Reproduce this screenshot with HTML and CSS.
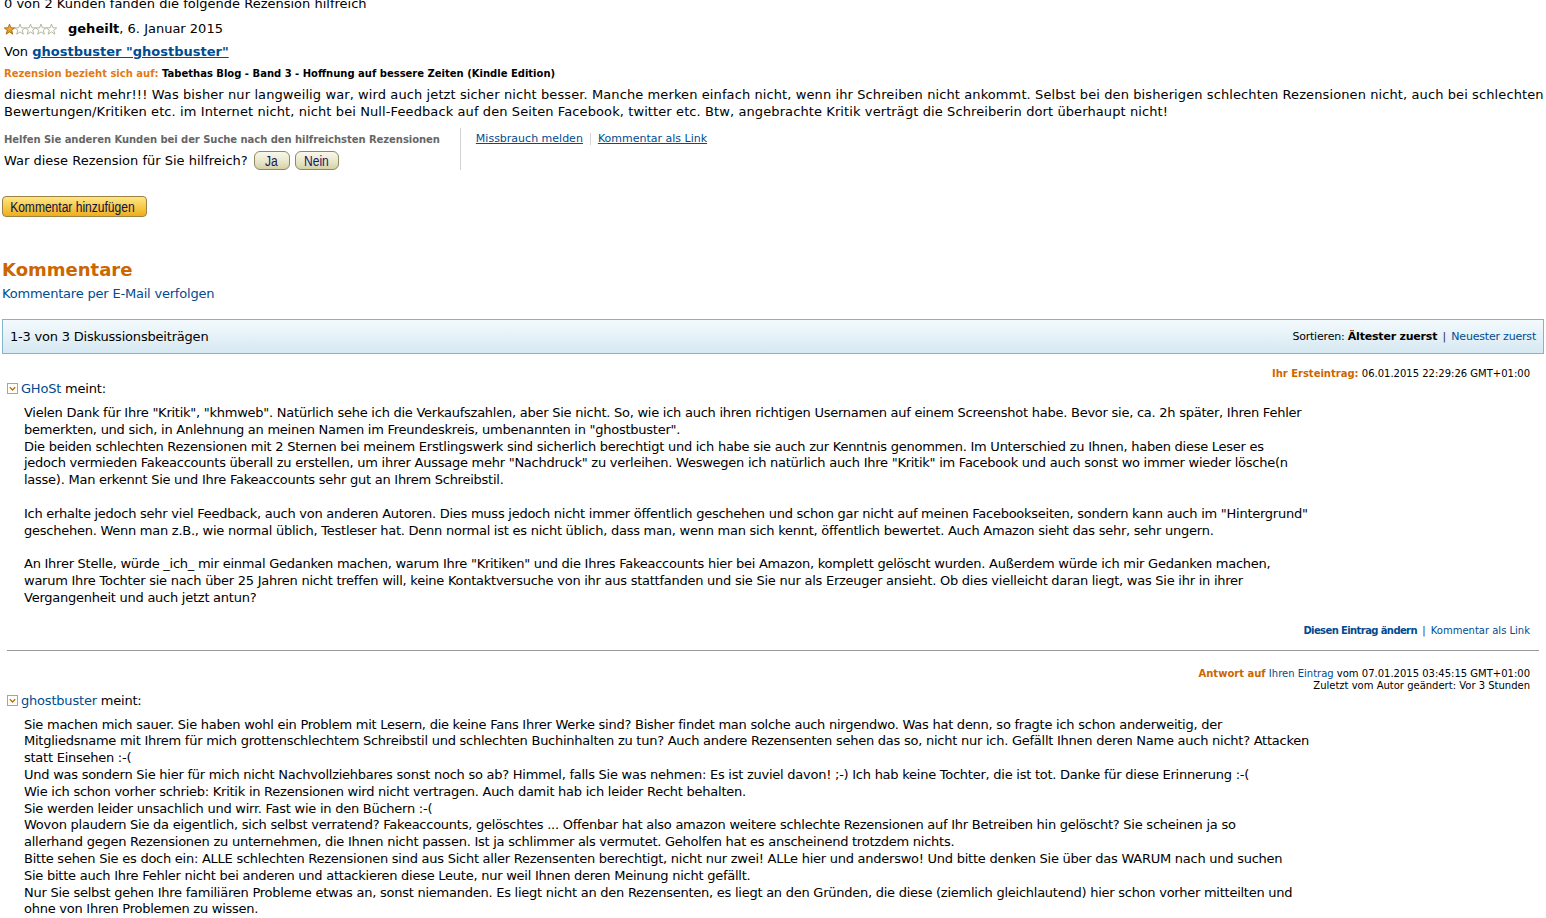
FILE: index.html
```html
<!DOCTYPE html>
<html lang="de">
<head>
<meta charset="utf-8">
<title>Rezension</title>
<link rel="stylesheet" href="styles.css">
</head>
<body>
<div class="page">
  <div class="review">
    <div class="helpful-count">0 von 2 Kunden fanden die folgende Rezension hilfreich</div>
    <div class="title-row">
      <svg class="stars" width="53" height="12" viewBox="0 0 53 12">
        <defs>
          <linearGradient id="gold" x1="0" y1="0" x2="0" y2="1">
            <stop offset="0" stop-color="#fbc04a"/>
            <stop offset="1" stop-color="#e08a10"/>
          </linearGradient>
          <polygon id="st" points="5.2,0.3 6.6,4 10.4,4.1 7.4,6.5 8.5,10.4 5.2,8.1 1.9,10.4 3,6.5 0,4.1 3.8,4"/>
        </defs>
        <use href="#st" x="0.3" y="0.8" fill="url(#gold)" stroke="#a36a10" stroke-width="0.9"/>
        <use href="#st" x="10.8" y="0.8" fill="#fff" stroke="#aeae98" stroke-width="0.9"/>
        <use href="#st" x="21.3" y="0.8" fill="#fff" stroke="#aeae98" stroke-width="0.9"/>
        <use href="#st" x="31.8" y="0.8" fill="#fff" stroke="#aeae98" stroke-width="0.9"/>
        <use href="#st" x="42.3" y="0.8" fill="#fff" stroke="#aeae98" stroke-width="0.9"/>
      </svg>
      <span><b>geheilt</b>, 6. Januar 2015</span>
    </div>
    <div class="author">Von <a class="author-link" href="#">ghostbuster "ghostbuster"</a></div>
    <div class="refers"><span class="refers-label">Rezension bezieht sich auf:</span> Tabethas Blog - Band 3 - Hoffnung auf bessere Zeiten (Kindle Edition)</div>
    <div class="review-text">diesmal nicht mehr!!! Was bisher nur langweilig war, wird auch jetzt sicher nicht besser. Manche merken einfach nicht, wenn ihr Schreiben nicht ankommt. Selbst bei den bisherigen schlechten Rezensionen nicht, auch bei schlechten Bewertungen/Kritiken etc. im Internet nicht, nicht bei Null-Feedback auf den Seiten Facebook, twitter etc. Btw, angebrachte Kritik verträgt die Schreiberin dort überhaupt nicht!</div>
    <div class="vote-row">
      <div class="vote">
        <div class="vote-head">Helfen Sie anderen Kunden bei der Suche nach den hilfreichsten Rezensionen</div>
        <div class="vote-q">War diese Rezension für Sie hilfreich? <button class="pill pill-ja"><span>Ja</span></button><button class="pill pill-nein"><span>Nein</span></button></div>
      </div>
      <div class="vote-links"><a href="#">Missbrauch melden</a><span class="vsep"></span><a href="#">Kommentar als Link</a></div>
    </div>
    <button class="add-comment"><span>Kommentar hinzufügen</span></button>
  </div>

  <h2 class="comments-title">Kommentare</h2>
  <a class="follow t" href="#">Kommentare per E-Mail verfolgen</a>

  <div class="bar">
    <span class="t">1-3 von 3 Diskussionsbeiträgen</span>
    <span class="sort t">Sortieren: <b>Ältester zuerst</b> <span class="pipe">|</span> <a href="#">Neuester zuerst</a></span>
  </div>

  <div class="posts">
    <div class="post">
      <div class="meta"><span class="meta-label">Ihr Ersteintrag:</span> 06.01.2015 22:29:26 GMT+01:00</div>
      <div class="who">
        <svg class="toggle" width="11" height="11" viewBox="0 0 11 11"><rect x="0.5" y="0.5" width="10" height="10" fill="#fff" stroke="#b7a27a"/><path d="M2.8 4.2 L5.5 6.9 L8.2 4.2" fill="none" stroke="#c36d00" stroke-width="1.4"/></svg>
        <span class="t"><a href="#">GHoSt</a> meint:</span>
      </div>
      <div class="body t">Vielen Dank für Ihre "Kritik", "khmweb". Natürlich sehe ich die Verkaufszahlen, aber Sie nicht. So, wie ich auch ihren richtigen Usernamen auf einem Screenshot habe. Bevor sie, ca. 2h später, Ihren Fehler<br>bemerkten, und sich, in Anlehnung an meinen Namen im Freundeskreis, umbenannten in "ghostbuster".<br>Die beiden schlechten Rezensionen mit 2 Sternen bei meinem Erstlingswerk sind sicherlich berechtigt und ich habe sie auch zur Kenntnis genommen. Im Unterschied zu Ihnen, haben diese Leser es<br>jedoch vermieden Fakeaccounts überall zu erstellen, um ihrer Aussage mehr "Nachdruck" zu verleihen. Weswegen ich natürlich auch Ihre "Kritik" im Facebook und auch sonst wo immer wieder lösche(n<br>lasse). Man erkennt Sie und Ihre Fakeaccounts sehr gut an Ihrem Schreibstil.<br><br>Ich erhalte jedoch sehr viel Feedback, auch von anderen Autoren. Dies muss jedoch nicht immer öffentlich geschehen und schon gar nicht auf meinen Facebookseiten, sondern kann auch im "Hintergrund"<br>geschehen. Wenn man z.B., wie normal üblich, Testleser hat. Denn normal ist es nicht üblich, dass man, wenn man sich kennt, öffentlich bewertet. Auch Amazon sieht das sehr, sehr ungern.<br><br>An Ihrer Stelle, würde _ich_ mir einmal Gedanken machen, warum Ihre "Kritiken" und die Ihres Fakeaccounts hier bei Amazon, komplett gelöscht wurden. Außerdem würde ich mir Gedanken machen,<br>warum Ihre Tochter sie nach über 25 Jahren nicht treffen will, keine Kontaktversuche von ihr aus stattfanden und sie Sie nur als Erzeuger ansieht. Ob dies vielleicht daran liegt, was Sie ihr in ihrer<br>Vergangenheit und auch jetzt antun?</div>
      <div class="actions"><a class="strong" href="#">Diesen Eintrag ändern</a> <span class="pipe">|</span> <a href="#">Kommentar als Link</a></div>
    </div>
    <hr class="divider">
    <div class="post">
      <div class="meta"><span class="meta-label">Antwort auf</span> <a href="#">Ihren Eintrag</a> vom 07.01.2015 03:45:15 GMT+01:00<br>Zuletzt vom Autor geändert: Vor 3 Stunden</div>
      <div class="who">
        <svg class="toggle" width="11" height="11" viewBox="0 0 11 11"><rect x="0.5" y="0.5" width="10" height="10" fill="#fff" stroke="#b7a27a"/><path d="M2.8 4.2 L5.5 6.9 L8.2 4.2" fill="none" stroke="#c36d00" stroke-width="1.4"/></svg>
        <span class="t"><a href="#">ghostbuster</a> meint:</span>
      </div>
      <div class="body t">Sie machen mich sauer. Sie haben wohl ein Problem mit Lesern, die keine Fans Ihrer Werke sind? Bisher findet man solche auch nirgendwo. Was hat denn, so fragte ich schon anderweitig, der<br>Mitgliedsname mit Ihrem für mich grottenschlechtem Schreibstil und schlechten Buchinhalten zu tun? Auch andere Rezensenten sehen das so, nicht nur ich. Gefällt Ihnen deren Name auch nicht? Attacken<br>statt Einsehen :-(<br>Und was sondern Sie hier für mich nicht Nachvollziehbares sonst noch so ab? Himmel, falls Sie was nehmen: Es ist zuviel davon! ;-) Ich hab keine Tochter, die ist tot. Danke für diese Erinnerung :-(<br>Wie ich schon vorher schrieb: Kritik in Rezensionen wird nicht vertragen. Auch damit hab ich leider Recht behalten.<br>Sie werden leider unsachlich und wirr. Fast wie in den Büchern :-(<br>Wovon plaudern Sie da eigentlich, sich selbst verratend? Fakeaccounts, gelöschtes ... Offenbar hat also amazon weitere schlechte Rezensionen auf Ihr Betreiben hin gelöscht? Sie scheinen ja so<br>allerhand gegen Rezensionen zu unternehmen, die Ihnen nicht passen. Ist ja schlimmer als vermutet. Geholfen hat es anscheinend trotzdem nichts.<br>Bitte sehen Sie es doch ein: ALLE schlechten Rezensionen sind aus Sicht aller Rezensenten berechtigt, nicht nur zwei! ALLe hier und anderswo! Und bitte denken Sie über das WARUM nach und suchen<br>Sie bitte auch Ihre Fehler nicht bei anderen und attackieren diese Leute, nur weil Ihnen deren Meinung nicht gefällt.<br>Nur Sie selbst gehen Ihre familiären Probleme etwas an, sonst niemanden. Es liegt nicht an den Rezensenten, es liegt an den Gründen, die diese (ziemlich gleichlautend) hier schon vorher mitteilten und<br>ohne von Ihren Problemen zu wissen.</div>
    </div>
  </div>
</div>
</body>
</html>
```
FILE: styles.css
```css
html, body {
  margin: 0;
  padding: 0;
  background: #fff;
}
body {
  overflow: hidden;
}
.page {
  margin: -5px 2px 0;
  font-family: "DejaVu Sans", Verdana, sans-serif;
  font-size: 13px;
  line-height: 17px;
  color: #000;
}
/* Tahoma-like narrower text */
.t {
  letter-spacing: -0.2px;
}
a {
  color: #004b91;
  text-decoration: none;
}
.review {
  padding-left: 2px;
}
.title-row {
  margin-top: 8px;
  display: flex;
  align-items: center;
  gap: 11px;
}
.stars {
  display: block;
}
.author {
  margin-top: 6px;
}
.author-link {
  font-weight: bold;
  text-decoration: underline;
}
.refers {
  margin-top: 7px;
  font-size: 10px;
  line-height: 14px;
  font-weight: bold;
}
.refers-label {
  color: #e47911;
}
.review-text {
  margin-top: 5px;
  margin-right: -24px;
  letter-spacing: 0.1px;
}
.vote-row {
  margin-top: 8px;
  display: flex;
  align-items: stretch;
}
.vote {
  padding-top: 5px;
  padding-right: 20px;
  border-right: 1px solid #d4d4d4;
}
.vote-head {
  font-size: 10px;
  line-height: 14px;
  font-weight: bold;
  color: #666;
  letter-spacing: -0.05px;
}
.vote-q {
  margin-top: 4px;
  display: flex;
  align-items: center;
  height: 19px;
}
.pill {
  font-family: "Liberation Sans", Arial, sans-serif;
  font-size: 14px;
  color: #14146a;
  height: 19px;
  padding: 0;
  margin-left: 5px;
  border: 1px solid #8b8a62;
  border-radius: 6px;
  background: linear-gradient(#f9f8ea, #e7e5c6 60%, #d4d1a6);
  line-height: 16px;
  display: flex;
  align-items: center;
  justify-content: center;
}
.pill span,
.add-comment span {
  display: inline-block;
  transform: scaleX(0.86);
  white-space: nowrap;
}
.pill-ja {
  width: 36px;
  margin-left: 6px;
}
.pill-nein {
  width: 44px;
}
.vote-links {
  padding-top: 4px;
  padding-left: 15px;
  font-size: 11px;
  line-height: 14px;
  display: flex;
  align-items: flex-start;
}
.vote-links a {
  text-decoration: underline;
}
.vsep {
  width: 1px;
  height: 12px;
  background: #d4d4d4;
  margin: 1px 7px 0;
}
.add-comment {
  display: flex;
  align-items: center;
  justify-content: center;
  margin-top: 26px;
  margin-left: -2px;
  width: 145px;
  height: 21px;
  padding: 0 4px 0 0;
  font-family: "Liberation Sans", Arial, sans-serif;
  font-size: 14px;
  color: #0a104a;
  border: 1px solid #9a8240;
  border-radius: 4px;
  background: linear-gradient(#fde688, #f8cb4a 50%, #eead20);
}
.comments-title {
  margin: 41px 0 0;
  font-size: 18px;
  line-height: 23px;
  font-weight: bold;
  color: #cc6600;
}
.follow {
  display: block;
  margin-top: 4px;
}
.bar {
  margin-top: 17px;
  height: 33px;
  border: 1px solid #86b3cc;
  background: linear-gradient(#f3fafd, #d6e8f2);
  display: flex;
  align-items: center;
  justify-content: space-between;
  padding: 0 7px 0 7px;
}
.sort {
  font-size: 11px;
}
.pipe {
  color: #333;
  padding: 0 2px;
}
.posts {
  margin: 0 5px;
}
.post {
  padding-right: 9px;
}
.meta {
  text-align: right;
  font-size: 10px;
  line-height: 12px;
}
.post:first-child .meta {
  margin-top: 14px;
}
.meta-label {
  color: #cc6600;
  font-weight: bold;
}
.who {
  display: flex;
  align-items: center;
  gap: 3px;
}
.toggle {
  display: block;
}
.body {
  margin-top: 8px;
  margin-left: 17px;
  width: 1300px;
  white-space: nowrap;
  letter-spacing: -0.25px;
  line-height: 16.8px;
}
.actions {
  margin-top: 17px;
  text-align: right;
  font-size: 10px;
  line-height: 13px;
}
.strong {
  font-weight: bold;
  letter-spacing: -0.6px;
}
.divider {
  margin: 13px 0 0;
  border: 0;
  border-top: 1px solid #999;
  height: 0;
}
.divider + .post .meta {
  margin-top: 17px;
}
```
